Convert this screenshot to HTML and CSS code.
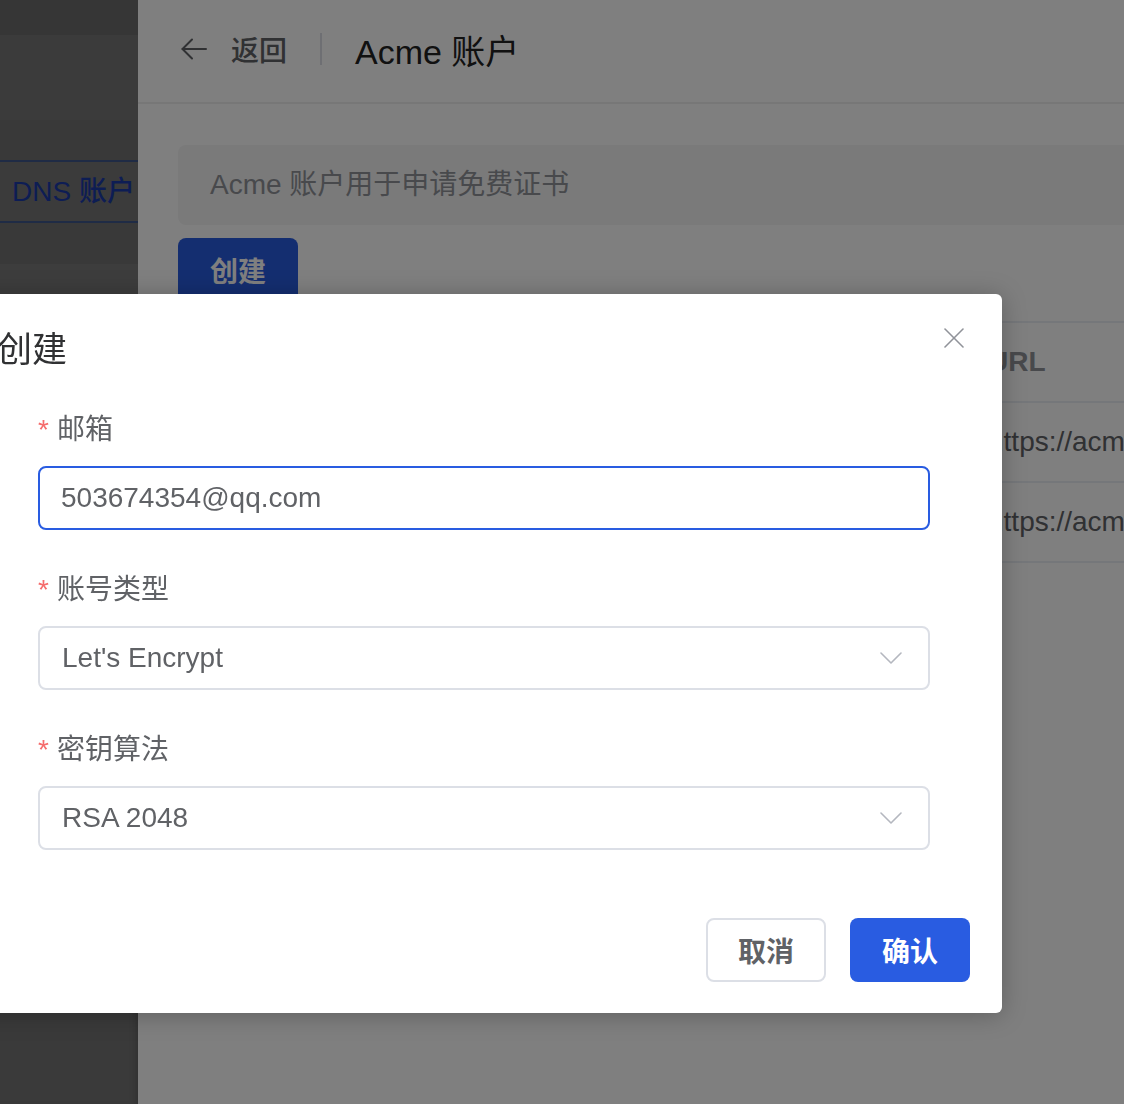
FILE: index.html
```html
<!DOCTYPE html>
<html lang="zh-CN">
<head>
<meta charset="utf-8">
<title>Acme 账户</title>
<link rel="stylesheet" href="styles.css">
</head>
<body>
<div class="app">
  <aside class="sidebar">
    <div class="side-top"></div>
    <div class="side-block side-block-a"></div>
    <div class="side-block side-block-b"></div>
    <div class="side-item active">DNS 账户</div>
    <div class="side-block side-block-c"></div>
    <div class="side-block side-block-d"></div>
  </aside>
  <main class="main">
    <header class="page-header">
      <div class="back">
        <svg class="back-arrow" width="26" height="22" viewBox="0 0 26 22" fill="none" stroke="currentColor" stroke-width="2" stroke-linecap="round" stroke-linejoin="round"><path d="M25 11H1.5"/><path d="M11 1.5L1.5 11L11 20.5"/></svg>
        <span class="back-text">返回</span>
      </div>
      <span class="header-divider"></span>
      <h1 class="page-title">Acme 账户</h1>
    </header>
    <section class="content">
      <div class="alert">Acme 账户用于申请免费证书</div>
      <button class="btn-primary create-btn">创建</button>
      <div class="table">
        <div class="row head">
          <div class="cell"></div>
          <div class="cell">URL</div>
        </div>
        <div class="row">
          <div class="cell"></div>
          <div class="cell">https://acme-v02.api.letsencrypt.org/directory</div>
        </div>
        <div class="row">
          <div class="cell"></div>
          <div class="cell">https://acme.zerossl.com/v2/DV90</div>
        </div>
      </div>
    </section>
  </main>
</div>

<div class="overlay"></div>

<div class="dialog">
  <div class="dialog-header">
    <span class="dialog-title">创建</span>
    <button class="dialog-close" aria-label="关闭">
      <svg width="20" height="20" viewBox="0 0 20 20" fill="none" stroke="currentColor" stroke-width="1.6" stroke-linecap="round"><path d="M1 1L19 19"/><path d="M19 1L1 19"/></svg>
    </button>
  </div>
  <form class="dialog-body">
    <div class="form-item">
      <label class="form-label"><span class="req">*</span>邮箱</label>
      <div class="control focused">
        <span class="control-text">503674354@qq.com</span>
      </div>
    </div>
    <div class="form-item">
      <label class="form-label"><span class="req">*</span>账号类型</label>
      <div class="control">
        <span class="control-text">Let's Encrypt</span>
        <svg class="chevron" width="22" height="12" viewBox="0 0 22 12" fill="none" stroke="currentColor" stroke-width="1.6" stroke-linecap="round" stroke-linejoin="round"><path d="M1 1L11 11L21 1"/></svg>
      </div>
    </div>
    <div class="form-item last">
      <label class="form-label"><span class="req">*</span>密钥算法</label>
      <div class="control">
        <span class="control-text">RSA 2048</span>
        <svg class="chevron" width="22" height="12" viewBox="0 0 22 12" fill="none" stroke="currentColor" stroke-width="1.6" stroke-linecap="round" stroke-linejoin="round"><path d="M1 1L11 11L21 1"/></svg>
      </div>
    </div>
  </form>
  <div class="dialog-footer">
    <button class="btn-default">取消</button>
    <button class="btn-primary">确认</button>
  </div>
</div>
</body>
</html>
```

FILE: styles.css
```css
* { box-sizing: border-box; }

html, body {
  margin: 0;
  padding: 0;
  width: 1124px;
  height: 1104px;
  overflow: hidden;
  font-family: "Liberation Sans", "Noto Sans CJK SC", sans-serif;
  background: #ffffff;
}

.app {
  display: flex;
  height: 1104px;
}

/* ---------- sidebar ---------- */
.sidebar {
  width: 138px;
  flex-shrink: 0;
  background: #747474;
  display: flex;
  flex-direction: column;
  box-shadow: inset -6px 0 8px -6px rgba(0,0,0,0.25);
}
.side-top { height: 35px; background: #6c6c6c; }
.side-block { flex-shrink: 0; }
.side-block-a { height: 85px; background: #767676; }
.side-block-b { height: 40px; background: #737373; }
.side-block-c { height: 41px; background: #737373; }
.side-block-d { height: 31px; background: #7a7a7a; }

.side-item {
  height: 63px;
  border-top: 2px solid #3e568a;
  border-bottom: 2px solid #3e568a;
  background: #767676;
  color: #1a3aa8;
  font-size: 28px;
  font-weight: 500;
  line-height: 59px;
  padding-left: 12px;
  white-space: nowrap;
}

/* ---------- main ---------- */
.main {
  width: 1200px;
  flex-shrink: 0;
  background: #ffffff;
}

.page-header {
  height: 104px;
  border-bottom: 2px solid #eeeeee;
  display: flex;
  align-items: center;
  padding: 0 0 4px 43px;
}

.back {
  display: flex;
  align-items: center;
  color: #606266;
}
.back-arrow { margin-right: 24px; }
.back-text {
  font-size: 28px;
  font-weight: 500;
  color: #606266;
}

.header-divider {
  width: 2px;
  height: 32px;
  background: #dcdfe6;
  margin: 0 33px;
}

.page-title {
  margin: 0;
  font-size: 34px;
  font-weight: 400;
  color: #222222;
}

.content {
  padding: 41px 0 0 40px;
}

.alert {
  height: 80px;
  line-height: 80px;
  background: #f4f4f5;
  border-radius: 8px;
  padding-left: 32px;
  font-size: 28px;
  color: #909399;
}

.create-btn {
  margin-top: 13px;
}

.table {
  margin-top: 19px;
  border-top: 2px solid #ebeef5;
}
.row {
  display: grid;
  grid-template-columns: 790px 1fr;
  height: 80px;
  border-bottom: 2px solid #ebeef5;
  align-items: center;
}
.cell {
  padding: 0 20px;
  font-size: 28px;
  color: #606266;
  white-space: nowrap;
  overflow: hidden;
}
.row.head .cell {
  font-weight: 700;
  color: #909399;
}

/* ---------- buttons ---------- */
.btn-primary, .btn-default {
  width: 120px;
  height: 64px;
  border-radius: 8px;
  font-family: inherit;
  font-size: 28px;
  font-weight: 700;
  cursor: pointer;
  padding: 0;
}
.btn-primary {
  background: #295ce1;
  border: none;
  color: #ffffff;
}
.btn-default {
  background: #ffffff;
  border: 2px solid #dcdfe6;
  color: #606266;
}

/* ---------- overlay + dialog ---------- */
.overlay {
  position: fixed;
  inset: 0;
  background: rgba(0, 0, 0, 0.5);
}

.dialog {
  position: absolute;
  left: -43px;
  top: 294px;
  width: 1045px;
  background: #ffffff;
  border-radius: 6px;
  box-shadow: 0 2px 24px rgba(0, 0, 0, 0.25);
}

.dialog-header {
  position: relative;
  padding: 36px 40px 0;
  height: 76px;
}
.dialog-title {
  display: block;
  font-size: 35px;
  line-height: 40px;
  color: #303133;
}
.dialog-close {
  position: absolute;
  right: 38px;
  top: 34px;
  width: 20px;
  height: 20px;
  padding: 0;
  border: none;
  background: none;
  color: #909399;
  display: flex;
}

.dialog-body {
  margin: 0;
  padding: 36px 72px 0 81px;
}

.form-item {
  margin-bottom: 36px;
}
.form-item.last { margin-bottom: 0; }

.form-label {
  display: block;
  font-size: 28px;
  line-height: 44px;
  padding-top: 2px;
  margin-bottom: 14px;
  color: #606266;
}
.req {
  color: #f56c6c;
  margin-right: 8px;
}

.control {
  height: 64px;
  border: 2px solid #dcdfe6;
  border-radius: 8px;
  display: flex;
  align-items: center;
  justify-content: space-between;
  padding: 0 26px 0 22px;
}
.control.focused {
  border-color: #295ce1;
  padding-left: 21px;
}
.control-text {
  font-size: 28px;
  color: #606266;
}
.chevron {
  color: #b4b7bf;
}

.dialog-footer {
  display: flex;
  justify-content: flex-end;
  gap: 24px;
  padding: 68px 32px 31px;
}
```
